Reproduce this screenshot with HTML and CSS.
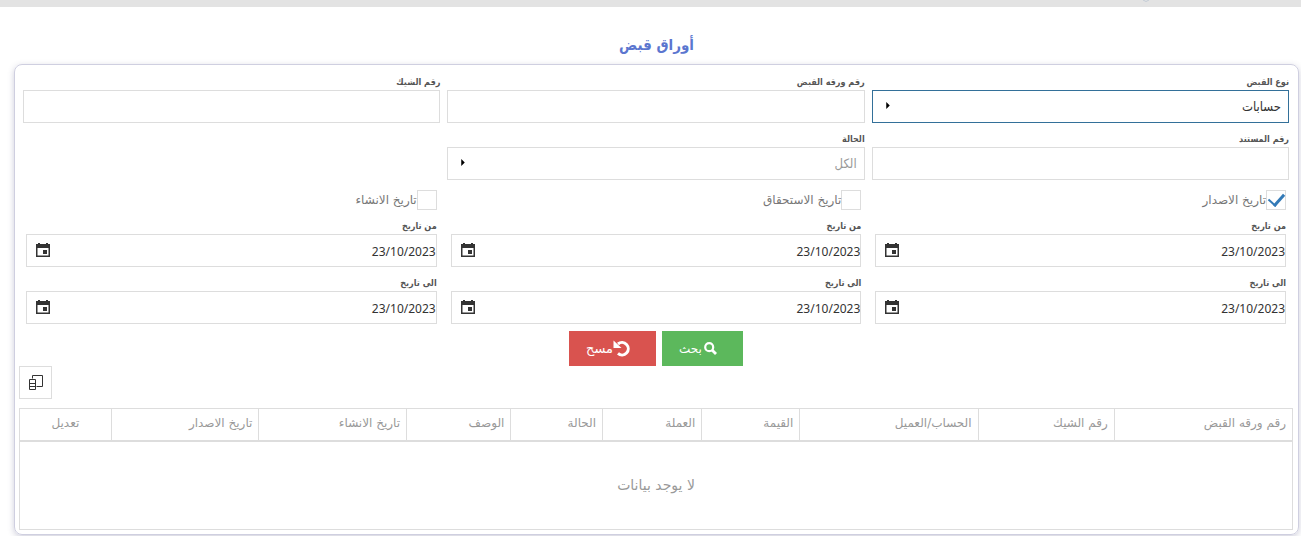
FILE: index.html
```
<!DOCTYPE html>
<html lang="ar" dir="rtl">
<head>
  <meta charset="UTF-8" />
  <meta name="viewport" content="width=device-width, initial-scale=1.0"/>
  <title>أوراق قبض</title>
  <link rel="stylesheet" href="styles.css">
</head>
<body>
  <svg class="sprite" aria-hidden="true">
    <symbol id="calendar" viewBox="0 0 14 14">
      <path d="M2 0h2v1h6V0h2v1h2v13H0V1h2zM1.500 5v7.500h11V5z" fill-rule="evenodd"/>
      <path d="M7 7h4v4H7z"/>
    </symbol>
    <symbol id="arrow" viewBox="0 0 4 8">
      <path d="M0 0l4 4-4 4z"/>
    </symbol>
  </svg>

  <header class="topbar">
    <svg width="6" height="2" viewBox="0 0 6 2"><path d="M0 0q3 3 6 0" fill="none" stroke="#c3ccd6"/></svg>
  </header>

  <main>
    <h1 class="title">أوراق قبض</h1>

    <div class="panel">
      <form id="receiptsForm">
        <div class="fields">
          <div class="form-group">
            <label for="receiptType">نوع القبض</label>
            <div class="select-box">
              <select id="receiptType" class="control active">
                <option>حسابات</option>
              </select>
              <svg class="arrow"><use href="#arrow"/></svg>
            </div>
          </div>
          <div class="form-group">
            <label for="receiptNo">رقم ورقه القبض</label>
            <input type="text" id="receiptNo" class="control" />
          </div>
          <div class="form-group">
            <label for="chequeNo">رقم الشيك</label>
            <input type="text" id="chequeNo" class="control" />
          </div>
          <div class="form-group">
            <label for="documentNo">رقم المستند</label>
            <input type="text" id="documentNo" class="control" />
          </div>
          <div class="form-group">
            <label for="status">الحالة</label>
            <div class="select-box">
              <select id="status" class="control muted">
                <option>الكل</option>
              </select>
              <svg class="arrow"><use href="#arrow"/></svg>
            </div>
          </div>
        </div>

        <div class="dates">
          <label class="check"><input type="checkbox" checked />تاريخ الاصدار</label>
          <label class="check"><input type="checkbox" />تاريخ الاستحقاق</label>
          <label class="check"><input type="checkbox" />تاريخ الانشاء</label>

          <div class="form-group">
            <label for="issueFrom">من تاريخ</label>
            <div class="date-box">
              <input type="text" id="issueFrom" value="23/10/2023" />
              <button type="button" aria-label="من تاريخ"><svg><use href="#calendar"/></svg></button>
            </div>
          </div>
          <div class="form-group">
            <label for="dueFrom">من تاريخ</label>
            <div class="date-box">
              <input type="text" id="dueFrom" value="23/10/2023" />
              <button type="button" aria-label="من تاريخ"><svg><use href="#calendar"/></svg></button>
            </div>
          </div>
          <div class="form-group">
            <label for="createdFrom">من تاريخ</label>
            <div class="date-box">
              <input type="text" id="createdFrom" value="23/10/2023" />
              <button type="button" aria-label="من تاريخ"><svg><use href="#calendar"/></svg></button>
            </div>
          </div>

          <div class="form-group">
            <label for="issueTo">الى تاريخ</label>
            <div class="date-box">
              <input type="text" id="issueTo" value="23/10/2023" />
              <button type="button" aria-label="الى تاريخ"><svg><use href="#calendar"/></svg></button>
            </div>
          </div>
          <div class="form-group">
            <label for="dueTo">الى تاريخ</label>
            <div class="date-box">
              <input type="text" id="dueTo" value="23/10/2023" />
              <button type="button" aria-label="الى تاريخ"><svg><use href="#calendar"/></svg></button>
            </div>
          </div>
          <div class="form-group">
            <label for="createdTo">الى تاريخ</label>
            <div class="date-box">
              <input type="text" id="createdTo" value="23/10/2023" />
              <button type="button" aria-label="الى تاريخ"><svg><use href="#calendar"/></svg></button>
            </div>
          </div>
        </div>

        <div class="button-row">
          <button type="submit" class="btn btn-search">
            <svg width="13" height="13" viewBox="0 0 13 13" fill="none" stroke="currentColor" stroke-width="2.2">
              <circle cx="5.200" cy="5.200" r="4"/>
              <path d="M8 8l4 4" stroke-width="2.800"/>
            </svg>
            بحث
          </button>
          <button type="reset" class="btn btn-clear">
            <svg width="18" height="17" viewBox="0 0 18 17">
              <path d="M5 4A6.200 6.200 0 1 1 5 13.400" fill="none" stroke="currentColor" stroke-width="3"/>
              <path d="M.5 .5v7.500h8z" fill="currentColor"/>
            </svg>
            مسح
          </button>
        </div>
      </form>

      <div class="toolbar">
        <button type="button" class="column-chooser" aria-label="الأعمدة">
          <svg width="16" height="16" viewBox="0 0 16 16" fill="none" stroke="currentColor">
            <path d="M4.500 3.500v-3h10v11h-6"/>
            <path d="M1.500 4.500h6v10h-6zM1.500 8.500h6M1.500 11.500h6"/>
          </svg>
        </button>
      </div>

      <table class="grid">
        <colgroup>
          <col class="col-paper"><col class="col-cheque"><col class="col-account"><col class="col-amount"><col class="col-currency">
          <col class="col-status"><col class="col-desc"><col class="col-date"><col class="col-date"><col class="col-edit">
        </colgroup>
        <thead>
          <tr>
            <th>رقم ورقه القبض</th>
            <th>رقم الشيك</th>
            <th>الحساب/العميل</th>
            <th>القيمة</th>
            <th>العملة</th>
            <th>الحالة</th>
            <th>الوصف</th>
            <th>تاريخ الانشاء</th>
            <th>تاريخ الاصدار</th>
            <th class="center">تعديل</th>
          </tr>
        </thead>
        <tbody>
          <tr>
            <td colspan="10">لا يوجد بيانات</td>
          </tr>
        </tbody>
      </table>
    </div>
  </main>
</body>
</html>
```
FILE: styles.css
```
* {
  box-sizing: border-box;
}

body {
  margin: 0;
  background-color: #fff;
  font-family: "DejaVu Sans", sans-serif;
  font-size: 12px;
  color: #333;
}

input,
select,
button {
  font-family: inherit;
}

.sprite {
  position: absolute;
  width: 0;
  height: 0;
}

.topbar {
  display: flex;
  align-items: flex-start;
  height: 7px;
  padding-right: 152px;
  background-color: #e3e3e3;
}

main {
  padding: 28px 2px 2px 14px;
}

.title {
  margin: 0 0 9px;
  font-family: "DejaVu Sans Condensed", "DejaVu Sans", sans-serif;
  font-size: 15px;
  line-height: 20px;
  text-align: center;
  color: #5b76cf;
}

.panel {
  padding: 10px 5px 4px 4px;
  border: 1px solid #cfcfe0;
  border-radius: 8px;
  box-shadow: 0 2px 6px rgba(60, 60, 110, 0.25);
}

.fields,
.dates {
  display: grid;
  grid-template-columns: repeat(3, 1fr);
  row-gap: 9px;
}

.fields {
  column-gap: 7px;
  padding: 0 4px;
}

.dates {
  column-gap: 14px;
  padding: 10px 7px 7px;
}

.form-group label {
  display: block;
  margin-bottom: 1px;
  font-family: "DejaVu Sans Condensed", "DejaVu Sans", sans-serif;
  font-size: 9px;
  font-weight: bold;
  line-height: 14px;
  color: #555;
}

.control {
  display: block;
  width: 100%;
  height: 33px;
  padding: 0 7px;
  border: 1px solid #ddd;
  border-radius: 0;
  background-color: #fff;
  color: #333;
  font-family: "DejaVu Sans Condensed", "DejaVu Sans", sans-serif;
  font-size: 13px;
  appearance: none;
  outline: none;
}

.control.active {
  border-color: #337099;
}

.control.muted {
  color: #999;
}

.select-box {
  position: relative;
}

.arrow {
  position: absolute;
  left: 14px;
  top: 12px;
  width: 4px;
  height: 7px;
}

.check {
  display: flex;
  align-items: center;
  height: 20px;
  font-size: 12px;
  color: #777;
}

.check input {
  display: grid;
  place-items: center;
  width: 20px;
  height: 20px;
  margin: 0;
  border: 1px solid #ddd;
  background-color: #fff;
  appearance: none;
}

.check input:checked::after {
  content: '';
  width: 13px;
  height: 7px;
  margin-bottom: 4px;
  border-left: 2px solid #337ab7;
  border-bottom: 3px solid #337ab7;
  transform: rotate(-48deg);
}

.date-box {
  display: flex;
  height: 33px;
  border: 1px solid #ddd;
}

.date-box input {
  flex: 1;
  min-width: 0;
  padding: 1px 0 0;
  border: none;
  outline: none;
  background: none;
  font-family: "Noto Sans", sans-serif;
  font-size: 12px;
  color: #333;
}

.date-box button {
  display: flex;
  align-items: center;
  justify-content: center;
  width: 32px;
  padding: 0 0 2px;
  border: none;
  background: none;
  color: #333;
}

.date-box svg {
  width: 14px;
  height: 14px;
  fill: currentColor;
}

.button-row {
  display: flex;
  justify-content: center;
  gap: 6px;
}

.btn {
  display: flex;
  align-items: center;
  justify-content: center;
  height: 35px;
  border: none;
  color: #fff;
  font-size: 12px;
  cursor: pointer;
}

.btn-search {
  gap: 2px;
  padding: 0 26px 0 17px;
  background-color: #5cb85c;
}

.btn-clear {
  padding: 0 25px 0 17px;
  background-color: #d9534f;
  font-size: 13px;
}

.toolbar {
  display: flex;
  justify-content: flex-end;
  margin-bottom: 9px;
}

.column-chooser {
  display: flex;
  align-items: center;
  justify-content: center;
  width: 33px;
  height: 33px;
  padding: 0;
  border: 1px solid #ddd;
  background-color: #fff;
  color: #333;
}

.grid {
  width: 100%;
  table-layout: fixed;
  border-collapse: collapse;
}

.grid th,
.grid td {
  border: 1px solid #ddd;
  font-weight: normal;
  color: #999;
}

.grid th {
  height: 32px;
  padding: 0 6px 2px;
  border-bottom-width: 2px;
  font-size: 12px;
  text-align: right;
}

.grid th.center {
  text-align: center;
}

.grid td {
  height: 89px;
  padding: 0;
  font-size: 14px;
  text-align: center;
}

.col-paper { width: 14%; }
.col-cheque { width: 10.7%; }
.col-account { width: 14%; }
.col-amount { width: 7.7%; }
.col-currency { width: 7.8%; }
.col-status { width: 7.2%; }
.col-desc { width: 8.2%; }
.col-date { width: 11.6%; }
.col-edit { width: 7.2%; }
```
